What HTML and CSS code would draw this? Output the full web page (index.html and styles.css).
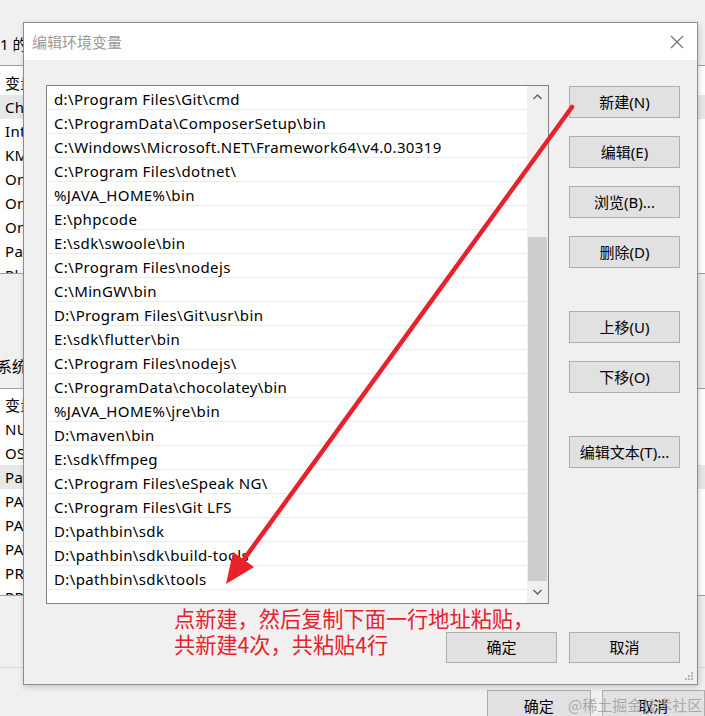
FILE: index.html
```html
<!DOCTYPE html>
<html lang="zh-CN">
<head>
<meta charset="utf-8">
<title>编辑环境变量</title>
<link rel="stylesheet" href="styles.css">
</head>
<body>
<div class="pwin">
  <div class="ptop"><span class="ptitle">1 的</span></div>
  <div class="plist plist1">
    <div class="prow">变量</div>
    <div class="prow sel">ChocolateyLastPathUpdate</div>
    <div class="prow">IntelliJ IDEA</div>
    <div class="prow">KMP_DUPLICATE_LIB_OK</div>
    <div class="prow">OneDrive</div>
    <div class="prow">OneDriveConsumer</div>
    <div class="prow">OneDriveCommercial</div>
    <div class="prow">Path</div>
    <div class="prow">PhpStorm</div>
  </div>
  <div class="pgap"><span class="plabel">系统变量</span></div>
  <div class="plist plist2">
    <div class="prow">变量</div>
    <div class="prow">NUMBER_OF_PROCESSORS</div>
    <div class="prow">OS</div>
    <div class="prow sel">Path</div>
    <div class="prow">PATHEXT</div>
    <div class="prow">PATH_ANDROID</div>
    <div class="prow">PATH_JAVA</div>
    <div class="prow">PROCESSOR_ARCHITECTURE</div>
    <div class="prow">PROCESSOR_IDENTIFIER</div>
  </div>
  <div class="pgap2"></div>
  <div class="pfoot">
    <div class="pbtn">确定</div>
    <div class="pbtn">取消</div>
  </div>
</div>

<div class="dialog">
  <div class="dtitle">
    <span class="dtext">编辑环境变量</span>
    <svg class="dclose" width="14" height="14" viewBox="0 0 14 14"><path d="M1 1 L13 13 M13 1 L1 13" stroke="#6f6f6f" stroke-width="1.1" fill="none"/></svg>
  </div>
  <div class="dbody">
    <div class="listbox">
      <div class="rows">
        <div class="row">d:\Program Files\Git\cmd</div>
        <div class="row">C:\ProgramData\ComposerSetup\bin</div>
        <div class="row">C:\Windows\Microsoft.NET\Framework64\v4.0.30319</div>
        <div class="row">C:\Program Files\dotnet\</div>
        <div class="row">%JAVA_HOME%\bin</div>
        <div class="row">E:\phpcode</div>
        <div class="row">E:\sdk\swoole\bin</div>
        <div class="row">C:\Program Files\nodejs</div>
        <div class="row">C:\MinGW\bin</div>
        <div class="row">D:\Program Files\Git\usr\bin</div>
        <div class="row">E:\sdk\flutter\bin</div>
        <div class="row">C:\Program Files\nodejs\</div>
        <div class="row">C:\ProgramData\chocolatey\bin</div>
        <div class="row">%JAVA_HOME%\jre\bin</div>
        <div class="row">D:\maven\bin</div>
        <div class="row">E:\sdk\ffmpeg</div>
        <div class="row">C:\Program Files\eSpeak NG\</div>
        <div class="row">C:\Program Files\Git LFS</div>
        <div class="row">D:\pathbin\sdk</div>
        <div class="row">D:\pathbin\sdk\build-tools</div>
        <div class="row">D:\pathbin\sdk\tools</div>
        <div class="row"></div>
      </div>
      <div class="vscroll">
        <svg class="sarrow" width="21" height="22" viewBox="0 0 21 22"><path d="M6.5 13 L10.5 9 L14.5 13" stroke="#606060" stroke-width="1.4" fill="none"/></svg>
        <div class="strack"><div class="sthumb"></div></div>
        <svg class="sarrow" width="21" height="22" viewBox="0 0 21 22"><path d="M6.5 9 L10.5 13 L14.5 9" stroke="#606060" stroke-width="1.4" fill="none"/></svg>
      </div>
    </div>
    <div class="side">
      <div class="btn">新建(N)</div>
      <div class="btn">编辑(E)</div>
      <div class="btn">浏览(B)...</div>
      <div class="btn">删除(D)</div>
      <div class="btn gap">上移(U)</div>
      <div class="btn">下移(O)</div>
      <div class="btn gap">编辑文本(T)...</div>
    </div>
  </div>
  <div class="dfoot">
    <div class="note">点新建，然后复制下面一行地址粘贴，</div>
    <div class="frow">
      <div class="note note2">共新建4次，共粘贴4行</div>
      <div class="btn fbtn">确定</div>
      <div class="btn fbtn">取消</div>
    </div>
  </div>
  <svg class="grip" width="10" height="10" viewBox="0 0 10 10" fill="#b5b5b5"><rect x="7" y="1" width="2" height="2"/><rect x="4" y="4" width="2" height="2"/><rect x="7" y="4" width="2" height="2"/><rect x="1" y="7" width="2" height="2"/><rect x="4" y="7" width="2" height="2"/><rect x="7" y="7" width="2" height="2"/></svg>
</div>

<svg class="arrow" width="705" height="716" viewBox="0 0 705 716">
  <line x1="572" y1="107" x2="242" y2="562" stroke="#e8212b" stroke-width="4.5" stroke-linecap="round"/>
  <polygon points="226,584 254,567 233,552" fill="#e8212b"/>
</svg>

<div class="watermark">@稀土掘金技术社区</div>
</body>
</html>
```

FILE: styles.css
```css
* { box-sizing: border-box; }
html, body { margin: 0; padding: 0; }
body {
  width: 705px;
  height: 716px;
  overflow: hidden;
  position: relative;
  background: #f0f0f0;
  font-family: "Noto Sans", "Noto Sans CJK SC", sans-serif;
  font-size: 15px;
  color: #000;
}

/* parent window in the background */
.pwin { display: flex; flex-direction: column; width: 705px; }
.ptop {
  height: 66px;
  padding-top: 33px;
  border-bottom: 1px solid #a0a0a0;
  line-height: 22px;
}
.ptitle { margin-left: 0; }
.plist { background: #fff; padding-top: 5px; overflow: hidden; }
.plist1 { height: 208px; border-bottom: 1px solid #a0a0a0; }
.plist2 { height: 207px; padding-top: 4px; border-bottom: 1px solid #a0a0a0; }
.prow { height: 24px; line-height: 24px; padding-left: 5px; white-space: nowrap; letter-spacing: 0.3px; }
.prow.sel { background: #e8e8e8; }
.pgap { height: 115px; padding-top: 81px; border-bottom: 1px solid #a0a0a0; line-height: 22px; }
.plabel { margin-left: -3px; }
.pgap2 { height: 94px; position: relative; }
.pgap2::after {
  content: "";
  display: block;
  margin-top: 71px;
  border-top: 1px solid #d8d8d8;
}
.pfoot { display: flex; gap: 11px; padding-left: 487px; }
.pbtn {
  width: 110px;
  height: 32px;
  background: #e1e1e1;
  border: 1px solid #adadad;
  text-align: center;
  line-height: 30px;
}

/* dialog */
.dialog {
  position: absolute;
  left: 23px;
  top: 22px;
  width: 675px;
  height: 663px;
  background: #f0f0f0;
  border: 1px solid #8c8c8c;
  box-shadow: 1px 2px 6px rgba(0,0,0,0.18);
  display: flex;
  flex-direction: column;
}
.dtitle {
  height: 37px;
  background: #fff;
  display: flex;
  align-items: center;
  justify-content: space-between;
  padding: 0 13px 0 8px;
}
.dtext { color: #9a9a9a; font-size: 15px; }
.dclose { display: block; }

.dbody {
  display: flex;
  gap: 20px;
  padding: 25px 17px 0 22px;
}
.listbox {
  width: 503px;
  height: 519px;
  border: 1px solid #828282;
  background: #fff;
  display: flex;
}
.rows { flex: 1; overflow: hidden; }
.row {
  height: 24px;
  line-height: 22px;
  padding-left: 7px;
  padding-top: 2px;
  border-bottom: 1px solid #ececec;
  white-space: nowrap;
  letter-spacing: 0.36px;
}
.vscroll {
  width: 21px;
  background: #f0f0f0;
  display: flex;
  flex-direction: column;
}
.sarrow { display: block; flex: none; }
.strack { flex: 1; display: flex; flex-direction: column; justify-content: flex-end; padding: 0 1px; }
.sthumb { height: 344px; background: #cdcdcd; }

.side { display: flex; flex-direction: column; gap: 18px; padding-top: 1px; }
.btn {
  width: 111px;
  height: 32px;
  background: #e1e1e1;
  border: 1px solid #adadad;
  text-align: center;
  line-height: 30px;
  font-size: 15px;
  color: #000;
  flex: none;
}
.btn.gap { margin-top: 25px; }

.dfoot { padding: 0 17px 0 150px; }
.note {
  color: #e8212b;
  font-size: 21.2px;
  line-height: 26px;
  margin-top: 1px;
  white-space: nowrap;
  font-family: "Noto Sans CJK SC", sans-serif;
}
.frow { display: flex; align-items: flex-start; gap: 12px; }
.note2 { flex: 1; margin-top: 0; }
.fbtn { width: 111px; height: 31px; margin-top: 1px; line-height: 29px; }

.grip { position: absolute; right: 3px; bottom: 3px; }

.arrow { position: absolute; left: 0; top: 0; pointer-events: none; }

.watermark {
  position: absolute;
  left: 568px;
  top: 694px;
  font-size: 15px;
  color: rgba(150,150,150,0.75);
  white-space: nowrap;
  font-family: "Noto Sans CJK SC", sans-serif;
}
```
